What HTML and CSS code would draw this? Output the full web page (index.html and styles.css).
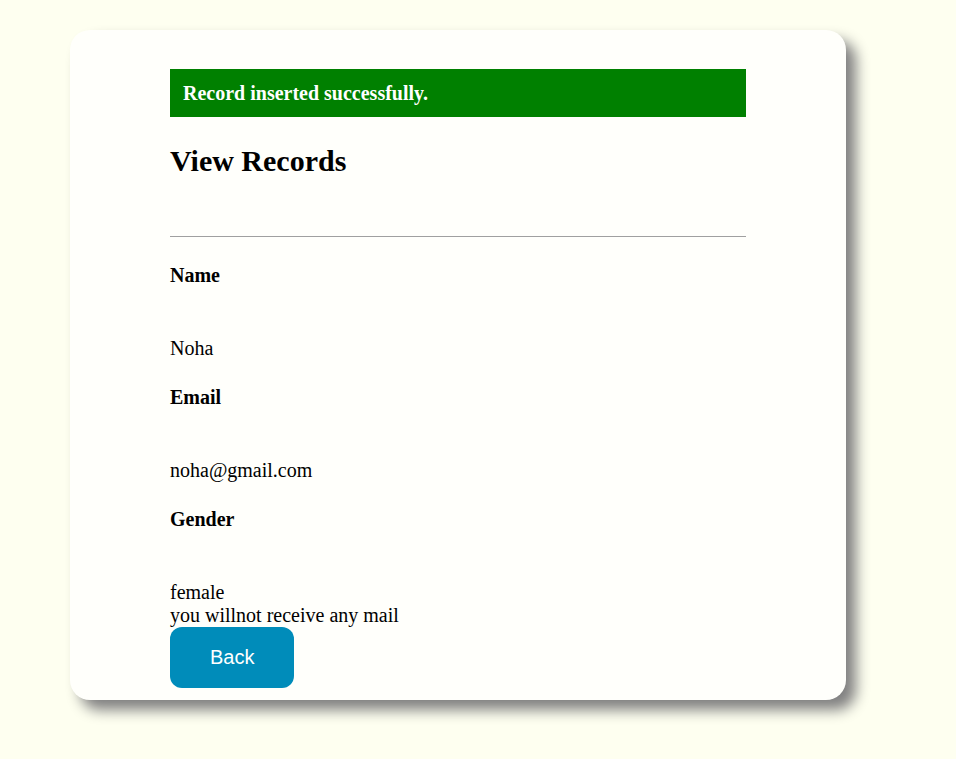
FILE: index.html
```html
<!DOCTYPE html>
<html>
<head>
<meta charset="utf-8">
<link rel="stylesheet" href="styles.css">
<title>View Records</title>
</head>
<body>
<div class="card">
  <div class="alert">Record inserted successfully.</div>
  <h2 class="title">View Records</h2>
  <hr class="rule">
  <div class="label first">Name</div>
  <div class="value">Noha</div>
  <div class="label">Email</div>
  <div class="value">noha@gmail.com</div>
  <div class="label">Gender</div>
  <div class="value">female<br>you willnot receive any mail</div>
  <button class="back">Back</button>
</div>
</body>
</html>
```
FILE: styles.css
```css
html, body {
  margin: 0;
  padding: 0;
}
html {
  background: #fefff0;
}
body {
  background: #fefff0;
  font-family: "Liberation Serif", "Times New Roman", serif;
  font-size: 20px;
  color: #000;
  padding: 30px 0 50px 0;
  min-height: 679px;
}
.card {
  width: 576px;
  margin-left: 70px;
  background: #fffffb;
  border-radius: 20px;
  box-shadow: 10px 10px 14px #808080;
  padding: 39px 100px 12px 100px;
  display: flow-root;
}
.alert {
  background: #008000;
  color: #fff;
  font-weight: bold;
  height: 48px;
  line-height: 48px;
  padding: 0 13px;
}
.title {
  font-size: 30px;
  font-weight: bold;
  margin: 27px 0 0 0;
  line-height: 34px;
}
.rule {
  border: 0;
  border-top: 1px solid #a0a0a0;
  margin: 58px 0 0 0;
  height: 0;
}
.label {
  font-weight: bold;
  line-height: 23px;
  margin-top: 26px;
}
.label.first {
  margin-top: 27px;
}
.value {
  line-height: 23px;
  margin-top: 50px;
}
.back {
  display: block;
  margin: 0;
  border: 0;
  background: #008cba;
  color: #fff;
  font-family: "Liberation Sans", Arial, sans-serif;
  font-size: 20px;
  line-height: 23px;
  padding: 19px 40px;
  border-radius: 12px;
  width: 124px;
}
```
